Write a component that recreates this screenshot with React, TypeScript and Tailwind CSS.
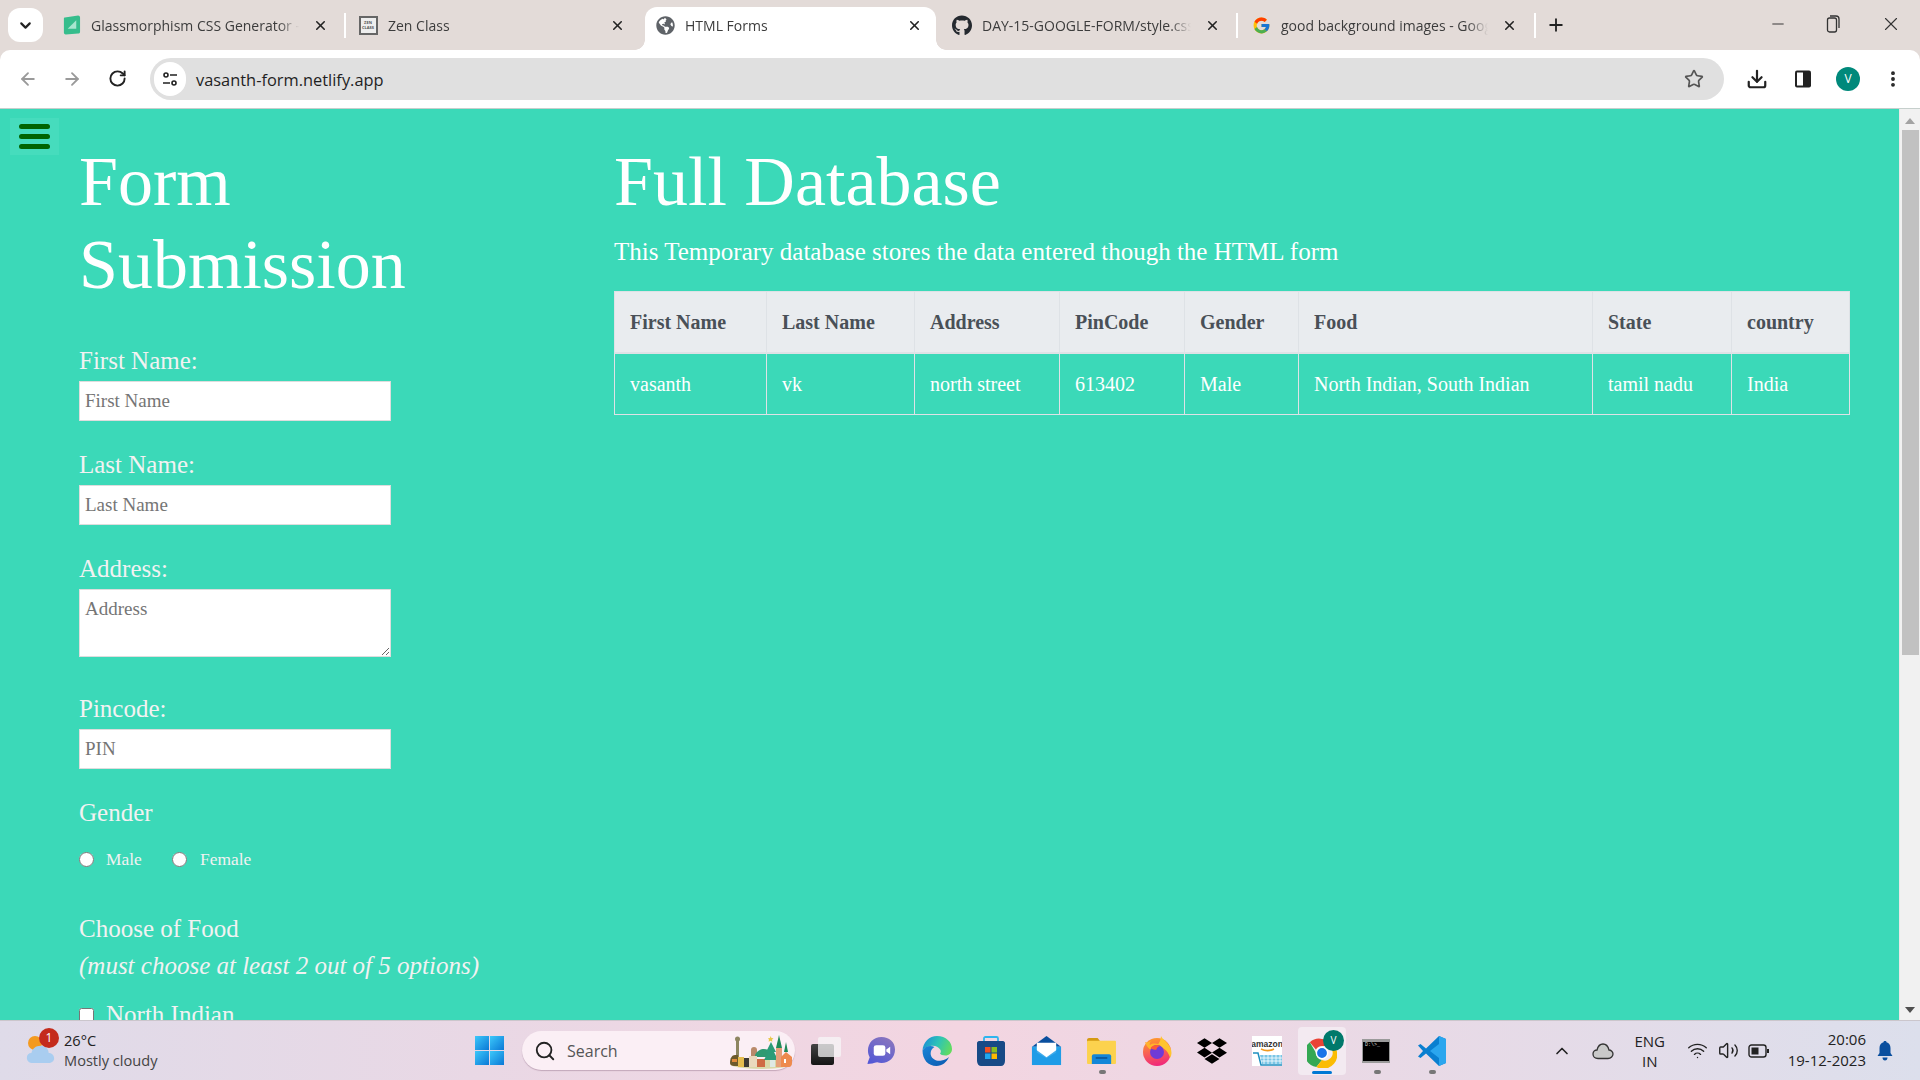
import { ArrowLeft, ArrowRight, ChevronDown, ChevronUp, Download, Minus, MoreVertical, Plus, RotateCw, Search, Star, Volume2, Wifi, X } from "lucide-react";
import { FaDropbox, FaGithub, FaGlobeAmericas } from "react-icons/fa";
import { FcGoogle } from "react-icons/fc";
import type { ReactNode } from "react";

const UI_FONT = "font-['Open_Sans','Noto_Sans',sans-serif]";

function GlassIcon() {
  return (
    <svg viewBox="0 0 20 22" className="h-[22px] w-[19px]">
      <path d="M3 3 17 1c1 0 2 1 2 2v15c0 1-.5 2-2 2L4 21c-1.500 0-2-1-2-2V4c0-.5.500-1 1-1z" fill="#36bd8c" />
      <path d="M6 6h9v9z" fill="#a8e6cf" transform="rotate(90 10.500 10.500)" />
    </svg>
  );
}

function ZenIcon() {
  return (
    <div className="flex h-[19px] w-[19px] flex-col items-center justify-center border-2 border-[#666] bg-[#eee] text-[4px] leading-[5px] font-bold text-[#555]">
      <span>ZEN</span>
      <span>CLASS</span>
    </div>
  );
}

const TABS: { title: string; icon: ReactNode; active?: boolean; box: string; divider?: boolean }[] = [
  { title: "Glassmorphism CSS Generator -", icon: <GlassIcon />, box: "w-[296px] pl-[13px] pr-[16px]", divider: true },
  { title: "Zen Class", icon: <ZenIcon />, box: "w-[299px] pl-[12px] pr-[20px]" },
  { title: "HTML Forms", icon: <FaGlobeAmericas className="h-[19px] w-[19px] text-[#5f6368]" />, active: true, box: "w-[291px] pl-[10px] pr-[14px]" },
  { title: "DAY-15-GOOGLE-FORM/style.css", icon: <FaGithub className="h-[21px] w-[21px] text-[#24292f]" />, box: "w-[300px] pl-[16px] pr-[16px]", divider: true },
  { title: "good background images - Google", icon: <FcGoogle className="h-[19px] w-[19px]" />, box: "w-[296px] pl-[13px] pr-[17px]", divider: true },
];

function Tab({ title, icon, active, box, divider }: (typeof TABS)[number]) {
  return (
    <>
      <div className={`relative flex h-[43px] shrink-0 items-center pb-[7px] ${box} ${active ? "rounded-t-[12px] bg-white" : ""}`}>
        {active && (
          <>
            <div className="absolute bottom-0 left-[-10px] h-[10px] w-[10px] bg-[radial-gradient(circle_at_0_0,transparent_9.500px,white_10px)]" />
            <div className="absolute right-[-10px] bottom-0 h-[10px] w-[10px] bg-[radial-gradient(circle_at_100%_0,transparent_9.500px,white_10px)]" />
          </>
        )}
        <div className="flex w-[20px] shrink-0 items-center justify-center">{icon}</div>
        <span className="ml-[10px] min-w-0 flex-1 overflow-hidden text-[14px] whitespace-nowrap text-[#3c3c3c] [mask-image:linear-gradient(to_right,black_90%,transparent)]">
          {title}
        </span>
        <X className="ml-[14px] h-[15px] w-[15px] shrink-0 text-[#222]" strokeWidth={2.5} />
      </div>
      {divider && <div className="mb-[12px] h-[25px] w-[2px] shrink-0 self-end bg-white" />}
    </>
  );
}

function TabStrip() {
  return (
    <div className="flex h-[50px] items-end bg-[#e3dbd8]">
      <div className="mb-[8px] ml-[8px] flex h-[34px] w-[35px] items-center justify-center rounded-[12px] bg-white">
        <ChevronDown className="h-[17px] w-[17px] text-[#222]" strokeWidth={3} />
      </div>
      <div className="ml-[5px] flex items-end">
        {TABS.map((t) => (
          <Tab key={t.title} {...t} />
        ))}
      </div>
      <Plus className="mb-[15px] ml-[10px] h-[20px] w-[20px] text-[#222]" strokeWidth={2.2} />
      <div className="ml-auto flex items-center pr-[18px] pb-[15px] text-[#333]">
        <Minus className="h-[18px] w-[18px]" strokeWidth={1.3} />
        <svg viewBox="0 0 16 20" className="ml-[38px] h-[20px] w-[16px]" fill="none" stroke="#333" strokeWidth="1.300">
          <rect x="2.500" y="4" width="9" height="14" rx="2" />
          <path d="M5 2h6c2 0 3 1 3 3v9" />
        </svg>
        <X className="ml-[39px] h-[22px] w-[22px]" strokeWidth={1.2} />
      </div>
    </div>
  );
}

function Toolbar() {
  return (
    <div className="flex h-[59px] items-center rounded-t-[10px] border-b border-[#c6cfcc] bg-white pb-[1px]">
      <ArrowLeft className="ml-[18px] h-[20px] w-[20px] text-[#9a9a9a]" strokeWidth={2.2} />
      <ArrowRight className="ml-[24px] h-[20px] w-[20px] text-[#9a9a9a]" strokeWidth={2.2} />
      <RotateCw className="ml-[26px] h-[19px] w-[19px] text-[#222]" strokeWidth={2.4} />
      <div className="ml-[23px] flex h-[42px] w-[1574px] items-center rounded-full bg-[#e0e0e0]">
        <div className="ml-[4px] flex h-[34px] w-[32px] items-center justify-center rounded-full bg-white">
          <svg viewBox="0 0 16 16" className="h-[16px] w-[16px]" fill="none" stroke="#222" strokeWidth="1.600">
            <circle cx="4" cy="4" r="2" />
            <path d="M8 4h7M1 12h7" />
            <circle cx="12" cy="12" r="2" />
          </svg>
        </div>
        <span className="mt-[3px] ml-[10px] text-[16.400px] text-[#1f1f1f]">vasanth-form.netlify.app</span>
        <Star className="mt-[1px] mr-[20px] ml-auto h-[20px] w-[20px] text-[#555]" strokeWidth={2} />
      </div>
      <Download className="ml-[22px] h-[22px] w-[22px] text-[#222]" strokeWidth={2.4} />
      <svg viewBox="0 0 18 20" className="ml-[26px] h-[20px] w-[18px]">
        <rect x="1" y="1.500" width="16" height="17" rx="2" fill="#222" />
        <rect x="3" y="3.500" width="6" height="13" fill="#fff" />
      </svg>
      <div className="ml-[24px] flex h-[24px] w-[24px] items-center justify-center rounded-full bg-[#00897b] text-[12px] text-white">V</div>
      <MoreVertical className="ml-[23px] h-[20px] w-[20px] text-[#222]" strokeWidth={2.6} />
    </div>
  );
}

function Field({ label, placeholder, gap }: { label: string; placeholder: string; gap: string }) {
  return (
    <div className={gap}>
      <label className="mb-[6px] block text-[25px] leading-[28px] text-[#f2f2f2]">{label}</label>
      <input
        placeholder={placeholder}
        className="block h-[40px] w-[312px] border border-[#dddddd] bg-white px-[5px] text-[19px] placeholder:text-[#757575]"
      />
    </div>
  );
}

function FormColumn() {
  return (
    <div className="w-[614px] shrink-0 pl-[79px] text-white">
      <h1 className="w-[380px] text-[70px] leading-[83px] font-normal">Form Submission</h1>
      <Field label="First Name:" placeholder="First Name" gap="mt-[41px]" />
      <Field label="Last Name:" placeholder="Last Name" gap="mt-[30px]" />
      <div className="mt-[30px]">
        <label className="mb-[6px] block text-[25px] leading-[28px] text-[#f2f2f2]">Address:</label>
        <textarea
          placeholder="Address"
          className="block h-[68px] w-[312px] border border-[#dddddd] bg-white px-[5px] pt-[5px] text-[19px] placeholder:text-[#757575]"
        />
      </div>
      <Field label="Pincode:" placeholder="PIN" gap="mt-[38px]" />
      <div className="mt-[30px] text-[25px] leading-[28px] text-[#f2f2f2]">Gender</div>
      <div className="mt-[18px] flex h-[28px] items-center text-[17.400px] text-[#f2f2f2]">
        <input type="radio" name="gender" className="h-[15px] w-[15px]" />
        <span className="ml-[12px] w-[66px]">Male</span>
        <input type="radio" name="gender" className="h-[15px] w-[15px]" />
        <span className="ml-[13px]">Female</span>
      </div>
      <div className="mt-[42px] text-[25px] leading-[28px] text-[#f2f2f2]">Choose of Food</div>
      <div className="mt-[9px] text-[25px] leading-[28px] whitespace-nowrap text-[#f2f2f2] italic">(must choose at least 2 out of 5 options)</div>
      <div className="mt-[21px] flex h-[28px] items-center text-[25px] text-[#f2f2f2]">
        <input type="checkbox" className="h-[15px] w-[15px]" />
        <span className="ml-[12px]">North Indian</span>
      </div>
    </div>
  );
}

const COLUMNS = [
  { head: "First Name", cell: "vasanth", w: "w-[152px]" },
  { head: "Last Name", cell: "vk", w: "w-[148px]" },
  { head: "Address", cell: "north street", w: "w-[145px]" },
  { head: "PinCode", cell: "613402", w: "w-[125px]" },
  { head: "Gender", cell: "Male", w: "w-[114px]" },
  { head: "Food", cell: "North Indian, South Indian", w: "w-[294px]" },
  { head: "State", cell: "tamil nadu", w: "w-[139px]" },
  { head: "country", cell: "India", w: "w-[118px]" },
];

function DatabaseColumn() {
  return (
    <div className="w-[1236px] shrink-0 text-white">
      <h1 className="text-[70px] leading-[83px] font-normal">Full Database</h1>
      <p className="mt-[14px] text-[25px] leading-[30px]">This Temporary database stores the data entered though the HTML form</p>
      <table className="mt-[24px] w-[1235px] table-fixed border-collapse text-left text-[20px]">
        <colgroup>
          {COLUMNS.map((c) => (
            <col key={c.head} className={c.w} />
          ))}
        </colgroup>
        <thead>
          <tr className="h-[61px] bg-[#e9ecef] text-[#495057]">
            {COLUMNS.map((c) => (
              <th key={c.head} className="border border-b-2 border-[#dee2e6] px-[15px] font-bold">
                {c.head}
              </th>
            ))}
          </tr>
        </thead>
        <tbody>
          <tr className="h-[62px]">
            {COLUMNS.map((c) => (
              <td key={c.head} className="border border-[#dee2e6] px-[15px]">
                {c.cell}
              </td>
            ))}
          </tr>
        </tbody>
      </table>
    </div>
  );
}

function Scrollbar() {
  return (
    <div className="flex w-[21px] shrink-0 flex-col items-center border-l border-[#e8e8e8] bg-[#f1f1f1]">
      <svg viewBox="0 0 10 6" className="mt-[9px] h-[6px] w-[10px]">
        <path d="M5 0l5 6H0z" fill="#a3a3a3" />
      </svg>
      <div className="mt-[6px] h-[525px] w-[17px] bg-[#c1c1c1]" />
      <svg viewBox="0 0 10 6" className="mt-auto mb-[7px] h-[6px] w-[10px]">
        <path d="M0 0h10L5 6z" fill="#505050" />
      </svg>
    </div>
  );
}

function WinLogo() {
  return (
    <svg viewBox="0 0 30 30" className="h-[29px] w-[29px]">
      <defs>
        <linearGradient id="win" x1="0" y1="0" x2="1" y2="1">
          <stop offset="0" stopColor="#3cc8fa" />
          <stop offset="1" stopColor="#0a78d6" />
        </linearGradient>
      </defs>
      <rect x="0" y="0" width="14.500" height="14.500" fill="url(#win)" />
      <rect x="15.500" y="0" width="14.500" height="14.500" fill="url(#win)" />
      <rect x="0" y="15.500" width="14.500" height="14.500" fill="url(#win)" />
      <rect x="15.500" y="15.500" width="14.500" height="14.500" fill="url(#win)" />
    </svg>
  );
}

function Town() {
  return (
    <svg viewBox="0 0 64 36" className="h-[36px] w-[64px]">
      <ellipse cx="32" cy="31" rx="31" ry="5" fill="#d9d8a8" />
      <rect x="7" y="6" width="3" height="22" fill="#8d8660" />
      <circle cx="8.500" cy="6" r="2.500" fill="#8d8660" />
      <path d="M22 17a3 3 0 0 1 6 0v6h-6z" fill="#b98a6a" />
      <path d="M26 22c3-6 9-7 13-5l2 7H26z" fill="#2f9a72" />
      <path d="M1 30c0-5 2-8 5-8h3v11H5c-2 0-4-1-4-3z" fill="#6d5a2a" />
      <rect x="3" y="26" width="5" height="3" fill="#e08a3a" />
      <rect x="9" y="24" width="6" height="10" fill="#e5bd4f" />
      <rect x="15" y="25" width="5" height="9" fill="#3d3a34" />
      <rect x="20" y="23" width="8" height="11" fill="#ead9bd" />
      <rect x="28" y="26" width="8" height="8" fill="#cf6b45" />
      <path d="M42 9l5 10h-2l4 8h-14l4-8h-2z" fill="#2c9c78" />
      <path d="M41 27h5v7h-5z" fill="#dfe9e4" />
      <path d="M41.500 3l1 2 2 .3-1.500 1.400.4 2-1.900-1-1.900 1 .4-2L39 5.300l2-.3z" fill="#e8c84a" />
      <path d="M50 2l3 13h-6z" fill="#1f8a58" />
      <rect x="47" y="15" width="6" height="19" fill="#e6a07a" />
      <path d="M57 9l2 10h-4z" fill="#1f8a58" />
      <path d="M52 24l5-5 6 5v6c0 2-1 4-3 4h-8z" fill="#ee8a4e" />
      <rect x="55" y="26" width="2" height="4" fill="#fff" />
    </svg>
  );
}

function TaskView() {
  return (
    <div className="relative h-[28px] w-[30px]">
      <div className="absolute bottom-0 left-0 h-[21px] w-[23px] rounded-[2px] bg-gradient-to-b from-[#444] to-[#151515]" />
      <div className="absolute top-0 right-0 h-[20px] w-[23px] rounded-[2px] bg-[#f7f5f7]/75" />
    </div>
  );
}

function ChatIcon() {
  return (
    <svg viewBox="0 0 30 30" className="h-[29px] w-[30px]">
      <defs>
        <linearGradient id="chat" x1="0.800" y1="0" x2="0.200" y2="1">
          <stop offset="0" stopColor="#8a76bd" />
          <stop offset="1" stopColor="#5358d6" />
        </linearGradient>
      </defs>
      <path d="M15.500 1C7.500 1 1.500 7 1.500 15c0 3 .800 5 1.800 7-.8 2.500-2 5-2.300 7 3 0 7-1 10-1.800 1.500.5 3 .8 4.500.8 8 0 14-6 14-14S23.500 1 15.500 1z" fill="url(#chat)" />
      <rect x="7.500" y="9.500" width="12" height="11" rx="2.500" fill="#fff" />
      <path d="M20.500 14l4-3v8l-4-3z" fill="#fff" />
    </svg>
  );
}

function EdgeIcon() {
  return (
    <svg viewBox="0 0 30 30" className="h-[30px] w-[30px]">
      <defs>
        <linearGradient id="edgeTop" x1="0" y1="0.300" x2="1" y2="0.600">
          <stop offset="0" stopColor="#1b8fd6" />
          <stop offset="0.500" stopColor="#2ec4b6" />
          <stop offset="1" stopColor="#63dc5e" />
        </linearGradient>
        <linearGradient id="edgeLow" x1="0" y1="0" x2="0.700" y2="1">
          <stop offset="0" stopColor="#1a86d8" />
          <stop offset="1" stopColor="#0d5fb5" />
        </linearGradient>
      </defs>
      <path d="M.5 14.500C1 6 7.500 0 15 0c9 0 15 6 15 13 0 4-3 6.500-6.500 6.500-3 0-5-1-5.500-2 1-1 1.200-2.500.2-4-2-3-6-4.500-9.700-3.500C4 11 1.500 12.500.5 14.500z" fill="url(#edgeTop)" />
      <path d="M.5 14.500C2.500 10.500 8 8.500 12.500 11c-3 1.500-4.500 5-3.500 8.500 1.200 4 6 6 10.500 5 3-.6 5.500-1.800 7.500-3.500-2 5-7 9-12.500 9C6 30 .5 23.500.5 14.500z" fill="url(#edgeLow)" />
    </svg>
  );
}

function StoreIcon() {
  return (
    <svg viewBox="0 0 30 30" className="h-[30px] w-[30px]">
      <path d="M8 6V2.500c0-1 .5-1.500 1.500-1.500h11c1 0 1.500.5 1.500 1.500V6" fill="none" stroke="#2fb5ee" strokeWidth="1.800" />
      <path d="M1 7c0-1 1-2 2-2h24c1 0 2 1 2 2v18c0 3-2 5-4 5H5c-2 0-4-2-4-5z" fill="#174a86" />
      <rect x="9" y="11" width="5.500" height="5.500" fill="#f25022" />
      <rect x="15.500" y="11" width="5.500" height="5.500" fill="#8bbf1f" />
      <rect x="9" y="17.500" width="5.500" height="5.500" fill="#1fa8ef" />
      <rect x="15.500" y="17.500" width="5.500" height="5.500" fill="#ffb900" />
    </svg>
  );
}

function MailIcon() {
  return (
    <svg viewBox="0 0 32 32" className="h-[31px] w-[31px]">
      <path d="M16 1 31 12H1z" fill="#0a4f9e" />
      <rect x="1" y="12" width="30" height="19" fill="#2aa4e8" />
      <path d="M6 8h20v10l-10 6-10-6z" fill="#fff" />
      <path d="M1 12l15 11 15-11v19H1z" fill="#1d9be6" opacity="0.85" />
    </svg>
  );
}

function FolderIcon() {
  return (
    <svg viewBox="0 0 32 28" className="h-[27px] w-[31px]">
      <path d="M1 3c0-1 1-2 2-2h9l3 4H1z" fill="#d59a12" />
      <rect x="1" y="4" width="30" height="24" rx="1" fill="#fcd24e" />
      <path d="M6 20c0-1 1-2 2-2h16c1 0 2 1 2 2v8H6z" fill="#1386d8" />
      <rect x="10" y="21" width="12" height="1.500" fill="#0b4f8f" />
    </svg>
  );
}

function FirefoxIcon() {
  return (
    <svg viewBox="0 0 30 30" className="h-[30px] w-[30px]">
      <defs>
        <linearGradient id="fox" x1="0.300" y1="0" x2="0.500" y2="1">
          <stop offset="0" stopColor="#ff9a2b" />
          <stop offset="1" stopColor="#f0277c" />
        </linearGradient>
      </defs>
      <circle cx="15" cy="16" r="14" fill="url(#fox)" />
      <path d="M19 0c1 3 6 5 9 11 2 4 2 8 0 11-1-5-5-11-13-12 2-3 4-6 4-10z" fill="#ffc42e" />
      <path d="M3 6c2 1 4 0 6-1-1 2-2 3-1 4 3-2 8-2 11 1-4 0-6 1-6 3-3 2-7 1-10-7z" fill="#ffb42a" />
      <circle cx="15" cy="16" r="7" fill="#6f3bd6" />
      <path d="M8.500 12c2-3 7-4 10-2-3 .5-4 2-4 3.500-2 .5-4 0-6-1.500z" fill="#ff5a36" />
    </svg>
  );
}

function AmazonIcon() {
  return (
    <div className="flex h-[30px] w-[30px] flex-col items-center overflow-hidden bg-white">
      <span className="mt-[4px] font-['Liberation_Sans',sans-serif] text-[8.500px] leading-[8px] font-bold text-[#333]">amazon</span>
      <svg viewBox="0 0 30 18" className="h-[18px] w-[30px]">
        <path d="M9 1c4 2 9 2 13 0" fill="none" stroke="#f29a1f" strokeWidth="1.500" />
        <path d="M1 5h5l3 12h21" fill="none" stroke="#1f8fc0" strokeWidth="1.500" />
        <path d="M8 7h22v9H10z" fill="#7ac6e6" />
        <path d="M8 10h22M9 13h21M12 7v9M16 7v9M20 7v9M24 7v9M28 7v9" stroke="#fff" strokeWidth="0.800" />
      </svg>
    </div>
  );
}

function ChromeIcon() {
  return (
    <div className="relative h-[48px] w-[48px] rounded-[4px] bg-[#f3eaf1]">
      <svg viewBox="0 0 32 32" className="absolute top-[11px] left-[9px] h-[30px] w-[30px]">
        <path d="M16 1a15 15 0 0 1 13 7.500H16a7.500 7.500 0 0 0-6.500 3.750L3 4.500A15 15 0 0 1 16 1z" fill="#ea4335" />
        <path d="M3 4.500l6.500 11.250a7.500 7.500 0 0 0 6.500 7.750L10 31A15 15 0 0 1 3 4.500z" fill="#34a853" />
        <path d="M29 8.500A15 15 0 0 1 10 31l6-7.500a7.500 7.500 0 0 0 6.500-15z" fill="#fbbc04" />
        <circle cx="16" cy="16" r="6" fill="#1a73e8" stroke="#fff" strokeWidth="1.500" />
      </svg>
      <div className="absolute top-[3px] left-[25px] flex h-[21px] w-[21px] items-center justify-center rounded-full bg-[#00796b] text-[10px] text-white">V</div>
      <div className="absolute bottom-[1px] left-[14px] h-[3px] w-[20px] rounded bg-[#0078d4]" />
    </div>
  );
}

function TerminalIcon() {
  return (
    <div className="h-[24px] w-[28px] border-t-[3px] border-r border-b-[2px] border-l border-[#9a9a9a] bg-black pl-[2px]">
      <div className="font-['Liberation_Mono',monospace] text-[5px] leading-[7px] text-[#ddd]">D:\&gt;_</div>
    </div>
  );
}

function VsCodeIcon() {
  return (
    <svg viewBox="0 0 30 32" className="h-[32px] w-[30px]">
      <path d="M22 1 9 13.500 3.500 9 1 10.500 6 16l-5 5.500L3.500 23 9 18.500 22 31l7-3V4z" fill="#0a7fd0" />
      <path d="M22 1l7 3v24l-7 3V9L13 16l9 7" fill="#2ba6ee" />
    </svg>
  );
}

function WeatherIcon() {
  return (
    <div className="relative h-[38px] w-[32px]">
      <div className="absolute top-[4px] left-[4px] h-[14px] w-[14px] rounded-full bg-[#f39a1f]" />
      <svg viewBox="0 0 30 22" className="absolute top-[12px] left-[2px] h-[20px] w-[29px]">
        <path d="M7 21C2 21 0 18 0 15s2-5 5-5c1-5 5-8 10-8s9 3 9 8c4 0 6 3 6 6s-3 5-6 5z" fill="#a9cdf0" />
      </svg>
      <div className="absolute top-[-4px] left-[15px] flex h-[20px] w-[20px] items-center justify-center rounded-full bg-[#c42b1c] text-[12px] text-white">1</div>
    </div>
  );
}

function Taskbar() {
  return (
    <div className="flex h-[60px] items-center border-t border-[#cbc6cc] bg-gradient-to-r from-[#dfdbe9] via-[#f3d5e1] to-[#dcdfec] text-[#222]">
      <div className="ml-[24px] flex w-[451px] items-center">
        <WeatherIcon />
        <div className="-mt-[2px] ml-[8px] text-[14.600px] leading-[20px]">
          <div>26°C</div>
          <div className="text-[#444]">Mostly cloudy</div>
        </div>
      </div>
      <WinLogo />
      <div className="ml-[18px] flex h-[39px] w-[273px] items-center rounded-full bg-[#fbeff5] pl-[12px] shadow-[0_1px_1px_rgba(120,80,110,0.35)]">
        <Search className="h-[22px] w-[22px] text-[#222]" strokeWidth={2} />
        <span className="ml-[11px] text-[16px] text-[#555]">Search</span>
        <div className="mr-[2px] ml-auto">
          <Town />
        </div>
      </div>
      <div className="ml-[16px] flex items-center">
        <div className="w-[30px]"><TaskView /></div>
        <div className="ml-[25px]"><ChatIcon /></div>
        <div className="ml-[26px]"><EdgeIcon /></div>
        <div className="ml-[24px]"><StoreIcon /></div>
        <div className="ml-[25px]"><MailIcon /></div>
        <div className="relative ml-[24px]">
          <FolderIcon />
          <div className="absolute bottom-[-10px] left-[13px] h-[4px] w-[7px] rounded-full bg-[#777]" />
        </div>
        <div className="ml-[25px]"><FirefoxIcon /></div>
        <FaDropbox className="ml-[25px] h-[30px] w-[30px] text-black" />
        <div className="ml-[25px]"><AmazonIcon /></div>
        <div className="ml-[16px]"><ChromeIcon /></div>
        <div className="relative ml-[16px]">
          <TerminalIcon />
          <div className="absolute bottom-[-11px] left-[12px] h-[4px] w-[7px] rounded-full bg-[#777]" />
        </div>
        <div className="relative ml-[27px]">
          <VsCodeIcon />
          <div className="absolute bottom-[-7px] left-[12px] h-[4px] w-[7px] rounded-full bg-[#777]" />
        </div>
      </div>
      <div className="ml-auto flex items-center pr-[27px]">
        <ChevronUp className="h-[20px] w-[20px] text-[#222]" strokeWidth={2} />
        <svg viewBox="0 0 22 18" className="ml-[20px] h-[18px] w-[22px]" fill="#c9c9c9" stroke="#333" strokeWidth="1.300">
          <path d="M6 16.500c-3 0-5-2-5-4.500s2-4 4-4c1-4 3-6 6-6s5 2 6 6c2 0 4 2 4 4s-2 4.500-5 4.500z" />
        </svg>
        <div className="ml-[20px] w-[32px] text-center text-[15px] leading-[20px]">
          <div>ENG</div>
          <div>IN</div>
        </div>
        <Wifi className="ml-[21px] h-[21px] w-[21px]" strokeWidth={1.6} />
        <Volume2 className="ml-[10px] h-[21px] w-[21px]" strokeWidth={1.6} />
        <svg viewBox="0 0 22 14" className="ml-[9px] h-[14px] w-[22px]" fill="none" stroke="#222" strokeWidth="1.400">
          <rect x="1" y="1" width="17" height="12" rx="2.500" />
          <rect x="3.500" y="3.500" width="7" height="7" fill="#222" stroke="none" />
          <path d="M20 5v4" strokeWidth="2" />
        </svg>
        <div className="-mt-[2px] ml-[18px] text-right text-[15px] leading-[21px] whitespace-nowrap">
          <div>20:06</div>
          <div>19-12-2023</div>
        </div>
        <svg viewBox="0 0 16 20" className="ml-[11px] h-[20px] w-[16px]" fill="#0a4f9e">
          <path d="M8 0c1 0 1.500.5 1.500 1.200C12 2 13.500 4 13.500 7v5l2 3H.5l2-3V7C2.500 4 4 2 6.500 1.200 6.500.5 7 0 8 0z" />
          <path d="M5.500 16.500h5C10.500 18.500 9.500 19.500 8 19.500s-2.500-1-2.500-3z" />
        </svg>
      </div>
    </div>
  );
}

export default function App() {
  return (
    <div className={`flex h-screen w-full flex-col overflow-hidden bg-[#e3dbd8] ${UI_FONT}`}>
      <TabStrip />
      <Toolbar />
      <div className="flex min-h-0 flex-1 bg-[#3bd9b8] font-['Liberation_Serif',serif]">
        <div className="relative flex min-w-0 flex-1 overflow-hidden pt-[31px]">
          <button className="absolute top-[9px] left-[10px] flex h-[37px] w-[49px] flex-col items-center justify-center gap-[5px] bg-[#46dcbd]">
            <span className="h-[5px] w-[31px] rounded-full bg-[#006400]" />
            <span className="h-[5px] w-[31px] rounded-full bg-[#006400]" />
            <span className="h-[5px] w-[31px] rounded-full bg-[#006400]" />
          </button>
          <FormColumn />
          <DatabaseColumn />
        </div>
        <Scrollbar />
      </div>
      <Taskbar />
    </div>
  );
}
